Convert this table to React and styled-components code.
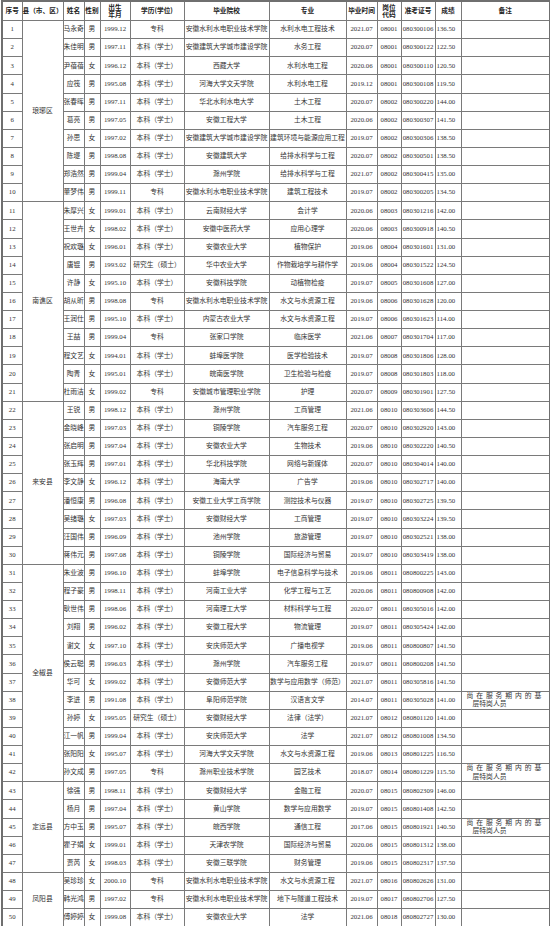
import React from 'react'
import styled, {createGlobalStyle} from 'styled-components'

const GlobalStyle = createGlobalStyle`
  html, body {
    margin: 0;
    padding: 0;
    background: #fff;
  }
`

const Page = styled.div`
  padding: 0 1px;
  background: #fff;
`

const Table = styled.table`
  width: 548px;
  table-layout: fixed;
  border-collapse: collapse;
  border: 2px solid #6f6f6f;
  font-family: "Liberation Serif", "Noto Sans CJK SC", serif;
  font-size: 6.8px;
  color: #333;
`

const HeadCell = styled.th`
  height: 18px;
  padding: 0;
  border: 1px solid #7a7a7a;
  font-family: "Noto Sans CJK SC", sans-serif;
  font-weight: 700;
  font-size: 6.7px;
  line-height: 7.5px;
  color: #222;
  text-align: center;
  vertical-align: middle;
  white-space: pre-line;
`

const Row = styled.tr`
  height: 18.14px;
`

const Cell = styled.td`
  padding: ${p => (p.$left ? '0 0 0 1px' : '0')};
  border: 1px solid #7a7a7a;
  line-height: 8.5px;
  text-align: ${p => (p.$left ? 'left' : 'center')};
  vertical-align: middle;
  white-space: nowrap;
  overflow: hidden;
`

const NoteCell = styled.td`
  padding: 0 0 0 5px;
  border: 1px solid #7a7a7a;
  line-height: 8.2px;
  text-align: left;
  vertical-align: middle;
  white-space: nowrap;
  overflow: hidden;
`

const NoteFirst = styled.div`
  letter-spacing: 2.9px;
`

const NoteSecond = styled.div`
  padding-left: 6px;
`

const COLS = [20, 41, 21, 16, 30, 54, 85, 77, 31, 24, 34, 26, 89]

const HEAD = ['序号', '县（市、区）', '姓名', '性别', '出生\n年月', '学历(学位)', '毕业院校', '专业', '毕业时间', '岗位\n代码', '准考证号', '成绩', '备注']

const BK = '本科（学士）'
const YJ = '研究生（硕士）'
const ZK = '专科'
const NOTE = ['尚在服务期内的基', '层特岗人员']

const COUNTIES = {
  1: ['琅琊区', 10],
  11: ['南谯区', 11],
  22: ['来安县', 9],
  31: ['全椒县', 12],
  43: ['定远县', 5],
  48: ['凤阳县', 3]
}

const ROWS = [
  ['马永奇', '男', '1999.12', ZK, '安徽水利水电职业技术学院', '水利水电工程技术', '2021.07', '08001', '080300106', '136.50'],
  ['朱佳明', '男', '1997.11', BK, '安徽建筑大学城市建设学院', '水务工程', '2020.07', '08001', '080300122', '122.50'],
  ['尹蓓蓓', '女', '1996.12', BK, '西藏大学', '水利水电工程', '2020.06', '08001', '080300110', '120.50'],
  ['应筏', '男', '1995.08', BK, '河海大学文天学院', '水利水电工程', '2019.12', '08001', '080300108', '119.50'],
  ['张春晖', '男', '1997.11', BK, '华北水利水电大学', '土木工程', '2020.07', '08002', '080300220', '144.00'],
  ['葛亮', '男', '1997.05', BK, '安徽工程大学', '土木工程', '2020.06', '08002', '080300307', '141.50'],
  ['孙思', '女', '1997.02', BK, '安徽建筑大学城市建设学院', '建筑环境与能源应用工程', '2019.07', '08002', '080300306', '138.50'],
  ['陈堤', '男', '1998.08', BK, '安徽建筑大学', '给排水科学与工程', '2020.07', '08002', '080300501', '138.50'],
  ['郑浩然', '男', '1999.04', BK, '滁州学院', '给排水科学与工程', '2021.07', '08002', '080300415', '135.00'],
  ['董梦伟', '男', '1999.11', ZK, '安徽水利水电职业技术学院', '建筑工程技术', '2019.07', '08002', '080300205', '134.50'],
  ['朱厚兴', '女', '1999.01', BK, '云南财经大学', '会计学', '2020.06', '08003', '080301216', '142.00'],
  ['王世卉', '女', '1998.02', BK, '安徽中医药大学', '应用心理学', '2020.06', '08003', '080300918', '140.50'],
  ['祝欢璐', '女', '1996.01', BK, '安徽农业大学', '植物保护', '2019.06', '08004', '080301601', '131.00'],
  ['唐锟', '男', '1993.02', YJ, '华中农业大学', '作物栽培学与耕作学', '2019.06', '08004', '080301522', '124.50'],
  ['许静', '女', '1995.10', BK, '安徽科技学院', '动植物检疫', '2019.07', '08005', '080301608', '127.00'],
  ['胡从昕', '男', '1998.08', ZK, '安徽水利水电职业技术学院', '水文与水资源工程', '2019.06', '08006', '080301628', '120.00'],
  ['王润仕', '男', '1995.10', BK, '内蒙古农业大学', '水文与水资源工程', '2019.07', '08006', '080301623', '114.00'],
  ['王喆', '男', '1999.04', ZK, '张家口学院', '临床医学', '2021.06', '08007', '080301704', '117.00'],
  ['程文艺', '女', '1994.01', BK, '蚌埠医学院', '医学检验技术', '2019.07', '08008', '080301806', '128.00'],
  ['陶青', '女', '1995.01', BK, '皖南医学院', '卫生检验与检疫', '2019.07', '08008', '080301803', '118.00'],
  ['杜雨洁', '女', '1999.02', ZK, '安徽城市管理职业学院', '护理', '2020.07', '08009', '080301901', '127.50'],
  ['王锐', '男', '1998.12', BK, '滁州学院', '工商管理', '2021.06', '08010', '080303606', '144.50'],
  ['金晓峰', '男', '1997.03', BK, '铜陵学院', '汽车服务工程', '2020.07', '08010', '080302920', '143.00'],
  ['张启明', '男', '1997.04', BK, '安徽农业大学', '生物技术', '2019.06', '08010', '080302220', '140.50'],
  ['张玉辉', '男', '1997.01', BK, '华北科技学院', '网络与新媒体', '2020.07', '08010', '080304014', '140.00'],
  ['李文静', '女', '1996.12', BK, '海南大学', '广告学', '2019.06', '08010', '080302717', '140.00'],
  ['潘恒康', '男', '1996.08', BK, '安徽工业大学工商学院', '测控技术与仪器', '2019.07', '08010', '080302725', '139.50'],
  ['吴绪璐', '女', '1997.03', BK, '安徽财经大学', '工商管理', '2019.07', '08010', '080303224', '139.50'],
  ['汪国伟', '男', '1996.09', BK, '池州学院', '旅游管理', '2019.07', '08010', '080302521', '138.00'],
  ['蒋伟元', '男', '1997.08', BK, '铜陵学院', '国际经济与贸易', '2019.07', '08010', '080303419', '138.00'],
  ['朱业波', '男', '1996.10', BK, '蚌埠学院', '电子信息科学与技术', '2019.06', '08011', '080800225', '143.00'],
  ['程子豪', '男', '1998.11', BK, '河南工业大学', '化学工程与工艺', '2020.06', '08011', '080800908', '142.00'],
  ['耿世伟', '男', '1998.06', BK, '河南理工大学', '材料科学与工程', '2020.07', '08011', '080305016', '142.00'],
  ['刘翔', '男', '1996.02', BK, '安徽工程大学', '物流管理', '2019.07', '08011', '080305424', '142.00'],
  ['谢文', '女', '1997.10', BK, '安庆师范大学', '广播电视学', '2019.06', '08011', '080800807', '141.50'],
  ['侯云聪', '男', '1996.03', BK, '滁州学院', '汽车服务工程', '2019.07', '08011', '080800208', '141.50'],
  ['华可', '女', '1999.02', BK, '安徽师范大学', '数学与应用数学（师范）', '2021.07', '08011', '080305816', '141.50'],
  ['李进', '男', '1991.08', BK, '阜阳师范学院', '汉语言文学', '2014.07', '08011', '080305028', '141.00', NOTE],
  ['孙婷', '女', '1995.05', YJ, '安徽财经大学', '法律（法学）', '2021.07', '08012', '080801120', '141.00'],
  ['江一帆', '男', '1999.04', BK, '安庆师范大学', '法学', '2021.07', '08012', '080801008', '134.50'],
  ['张阳阳', '女', '1995.07', BK, '河海大学文天学院', '水文与水资源工程', '2019.06', '08013', '080801225', '116.50'],
  ['孙文成', '男', '1997.05', ZK, '滁州职业技术学院', '园艺技术', '2018.07', '08014', '080801229', '115.50', NOTE],
  ['徐强', '男', '1998.11', BK, '安徽财经大学', '金融工程', '2020.07', '08015', '080802309', '146.00'],
  ['杨月', '男', '1997.04', BK, '黄山学院', '数学与应用数学', '2019.07', '08015', '080801408', '142.50'],
  ['方中玉', '男', '1995.07', BK, '皖西学院', '通信工程', '2017.06', '08015', '080801921', '140.50', NOTE],
  ['瞿子娟', '女', '1999.01', BK, '天津农学院', '国际经济与贸易', '2020.06', '08015', '080801312', '138.00'],
  ['贾芮', '女', '1998.03', BK, '安徽三联学院', '财务管理', '2019.06', '08015', '080802317', '137.50'],
  ['吴珍珍', '女', '2000.10', ZK, '安徽水利水电职业技术学院', '水文与水资源工程', '2021.07', '08016', '080802626', '131.00'],
  ['韩光鸿', '男', '1997.02', ZK, '安徽水利水电职业技术学院', '地下与隧道工程技术', '2019.07', '08017', '080802706', '127.50'],
  ['傅婷婷', '女', '1999.08', BK, '安徽农业大学', '法学', '2021.06', '08018', '080802727', '130.00']
]

const Note = ({lines}) => (
  <NoteCell>
    {lines && (
      <>
        <NoteFirst>{lines[0]}</NoteFirst>
        <NoteSecond>{lines[1]}</NoteSecond>
      </>
    )}
  </NoteCell>
)

const DataRow = ({index, data}) => {
  const no = index + 1
  const county = COUNTIES[no]
  const [name, sex, born, degree, school, major, grad, post, ticket, score, note] = data
  return (
    <Row>
      <Cell>{no}</Cell>
      {county && <Cell rowSpan={county[1]}>{county[0]}</Cell>}
      <Cell>{name}</Cell>
      <Cell>{sex}</Cell>
      <Cell>{born}</Cell>
      <Cell>{degree}</Cell>
      <Cell>{school}</Cell>
      <Cell>{major}</Cell>
      <Cell>{grad}</Cell>
      <Cell>{post}</Cell>
      <Cell>{ticket}</Cell>
      <Cell $left>{score}</Cell>
      <Note lines={note} />
    </Row>
  )
}

export default function App() {
  return (
    <Page>
      <GlobalStyle />
      <Table>
        <colgroup>
          {COLS.map((w, i) => <col key={i} style={{width: w}} />)}
        </colgroup>
        <thead>
          <tr>
            {HEAD.map(h => <HeadCell key={h}>{h}</HeadCell>)}
          </tr>
        </thead>
        <tbody>
          {ROWS.map((r, i) => <DataRow key={i} index={i} data={r} />)}
        </tbody>
      </Table>
    </Page>
  )
}
